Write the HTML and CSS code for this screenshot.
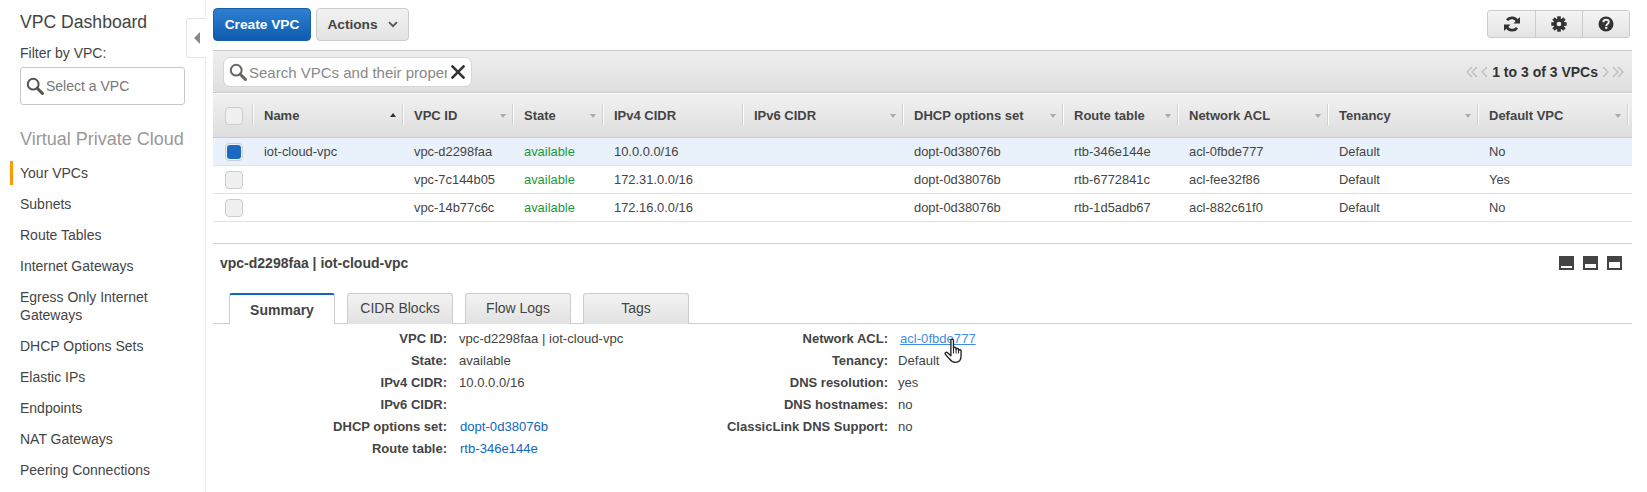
FILE: index.html
```html
<!DOCTYPE html>
<html lang="en">
<head>
<meta charset="utf-8">
<title>VPC Dashboard</title>
<link rel="stylesheet" href="styles.css">
</head>
<body>
<div class="app">
  <nav class="sidebar">
    <h1 class="dash-title">VPC Dashboard</h1>
    <div class="filter-label">Filter by VPC:</div>
    <div class="filter-box">
      <svg class="filter-icon" viewBox="0 0 18 18" width="18" height="18"><circle cx="7.2" cy="7.2" r="5.4" fill="none" stroke="#555" stroke-width="2"/><path d="M11.2 11.2L16.4 16.4" stroke="#555" stroke-width="3" stroke-linecap="round"/></svg>
      <span>Select a VPC</span>
    </div>
    <div class="nav-heading">Virtual Private Cloud</div>
    <ul class="nav-list">
      <li class="nav-item active">Your VPCs</li>
      <li class="nav-item">Subnets</li>
      <li class="nav-item">Route Tables</li>
      <li class="nav-item">Internet Gateways</li>
      <li class="nav-item">Egress Only Internet Gateways</li>
      <li class="nav-item">DHCP Options Sets</li>
      <li class="nav-item">Elastic IPs</li>
      <li class="nav-item">Endpoints</li>
      <li class="nav-item">NAT Gateways</li>
      <li class="nav-item">Peering Connections</li>
    </ul>
    <div class="collapse-handle"><span class="collapse-arrow"></span></div>
  </nav>

  <main class="main">
    <div class="toolbar">
      <button class="btn btn-primary">Create VPC</button>
      <button class="btn btn-default">Actions
        <svg class="caret" viewBox="0 0 10 7" width="10" height="7"><path d="M1 1.2L5 5.2L9 1.2" fill="none" stroke="#555" stroke-width="1.8"/></svg>
      </button>
      <div class="tool-group">
        <div class="tool-btn">
          <svg viewBox="0 0 16 16" width="16" height="16"><path d="M13.6 6.4A6 6 0 0 0 3 4.2M2.4 9.6A6 6 0 0 0 13 11.8" fill="none" stroke="#333" stroke-width="2.8"/><path d="M16 1V7.6H9.4ZM0 15V8.4H6.6Z" fill="#333"/></svg>
        </div>
        <div class="tool-btn">
          <svg viewBox="0 0 16 16" width="16" height="16"><g fill="#333"><circle cx="8" cy="8" r="5.6"/><rect x="6.200" y="0.300" width="3.600" height="15.400"/><rect x="6.200" y="0.300" width="3.600" height="15.400" transform="rotate(45 8 8)"/><rect x="6.200" y="0.300" width="3.600" height="15.400" transform="rotate(90 8 8)"/><rect x="6.200" y="0.300" width="3.600" height="15.400" transform="rotate(135 8 8)"/></g><circle cx="8" cy="8" r="2.300" fill="#eee"/></svg>
        </div>
        <div class="tool-btn">
          <svg viewBox="0 0 16 16" width="16" height="16"><circle cx="8" cy="8" r="7.500" fill="#333"/><path d="M5.300 6.200C5.400 4.600 6.500 3.800 8 3.800c1.600 0 2.800.9 2.800 2.300 0 2-2.500 2-2.500 3.800" fill="none" stroke="#eee" stroke-width="1.900"/><rect x="7.200" y="10.800" width="2.100" height="2.100" fill="#eee"/></svg>
        </div>
      </div>
    </div>

    <div class="search-bar">
      <div class="search-field">
        <svg class="search-icon" viewBox="0 0 18 18" width="18" height="18"><circle cx="7.200" cy="7.200" r="5.400" fill="none" stroke="#666" stroke-width="2"/><path d="M11.200 11.200L16.400 16.400" stroke="#666" stroke-width="3" stroke-linecap="round"/></svg>
        <span class="search-text">Search VPCs and their properties</span>
        <svg class="clear-icon" viewBox="0 0 14 14" width="14" height="14"><path d="M.6 .6L13.400 13.400M13.400 .6L.6 13.400" stroke="#333" stroke-width="2.600"/></svg>
      </div>
      <div class="pager">
        <svg viewBox="0 0 22 12" width="22" height="12"><path d="M6 1L1 6L6 11M11 1L6 6L11 11M21 1L16 6L21 11" fill="none" stroke="#bbb" stroke-width="1.200"/></svg>
        <span class="pager-text">1 to 3 of 3 VPCs</span>
        <svg viewBox="0 0 22 12" width="22" height="12"><path d="M1 1L6 6L1 11M11 1L16 6L11 11M16 1L21 6L16 11" fill="none" stroke="#bbb" stroke-width="1.200"/></svg>
      </div>
    </div>

    <div class="grid-row grid-head">
      <div class="head-cell head-check"><span class="check"></span></div>
      <div class="head-cell">Name<span class="sort sort-up"></span></div>
      <div class="head-cell">VPC ID<span class="sort"></span></div>
      <div class="head-cell">State<span class="sort"></span></div>
      <div class="head-cell">IPv4 CIDR</div>
      <div class="head-cell">IPv6 CIDR<span class="sort"></span></div>
      <div class="head-cell">DHCP options set<span class="sort"></span></div>
      <div class="head-cell">Route table<span class="sort"></span></div>
      <div class="head-cell">Network ACL<span class="sort"></span></div>
      <div class="head-cell">Tenancy<span class="sort"></span></div>
      <div class="head-cell">Default VPC<span class="sort"></span></div>
    </div>
    <div class="grid-row body-row selected">
      <div class="cell cell-check"><span class="check checked"></span></div>
      <div class="cell">iot-cloud-vpc</div><div class="cell">vpc-d2298faa</div><div class="cell ok">available</div><div class="cell">10.0.0.0/16</div><div class="cell"></div><div class="cell">dopt-0d38076b</div><div class="cell">rtb-346e144e</div><div class="cell">acl-0fbde777</div><div class="cell">Default</div><div class="cell">No</div>
    </div>
    <div class="grid-row body-row">
      <div class="cell cell-check"><span class="check"></span></div>
      <div class="cell"></div><div class="cell">vpc-7c144b05</div><div class="cell ok">available</div><div class="cell">172.31.0.0/16</div><div class="cell"></div><div class="cell">dopt-0d38076b</div><div class="cell">rtb-6772841c</div><div class="cell">acl-fee32f86</div><div class="cell">Default</div><div class="cell">Yes</div>
    </div>
    <div class="grid-row body-row">
      <div class="cell cell-check"><span class="check"></span></div>
      <div class="cell"></div><div class="cell">vpc-14b77c6c</div><div class="cell ok">available</div><div class="cell">172.16.0.0/16</div><div class="cell"></div><div class="cell">dopt-0d38076b</div><div class="cell">rtb-1d5adb67</div><div class="cell">acl-882c61f0</div><div class="cell">Default</div><div class="cell">No</div>
    </div>

    <section class="detail">
      <div class="detail-head">
        <h2 class="detail-title">vpc-d2298faa | iot-cloud-vpc</h2>
        <div class="pane-icons">
          <span class="pane-icon pane-s"></span>
          <span class="pane-icon pane-m"></span>
          <span class="pane-icon pane-l"></span>
        </div>
      </div>
      <div class="tabs">
        <div class="tab tab-active">Summary</div>
        <div class="tab">CIDR Blocks</div>
        <div class="tab">Flow Logs</div>
        <div class="tab">Tags</div>
      </div>
      <div class="kv-wrap">
        <dl class="kv kv-left">
          <dt>VPC ID:</dt><dd>vpc-d2298faa | iot-cloud-vpc</dd>
          <dt>State:</dt><dd>available</dd>
          <dt>IPv4 CIDR:</dt><dd>10.0.0.0/16</dd>
          <dt>IPv6 CIDR:</dt><dd></dd>
          <dt>DHCP options set:</dt><dd><a class="link">dopt-0d38076b</a></dd>
          <dt>Route table:</dt><dd><a class="link">rtb-346e144e</a></dd>
        </dl>
        <dl class="kv kv-right">
          <dt>Network ACL:</dt><dd><a class="link link-hover">acl-0fbde777<svg class="hand" viewBox="0 0 19 25" width="20" height="26"><path d="M6.500 2.300c0-1.600 2.500-1.600 2.500 0V10c.3-1.500 2.400-1.400 2.500.1V11c.3-1.300 2.300-1.200 2.400.2v.8c.4-1.100 2.300-1 2.400.4v5c0 3.500-1.700 6-5.300 6-3 0-4.400-1-5.600-3L1.200 15.700c-.9-1.500 1-2.800 2.200-1.600l3.100 2.900Z" fill="#fff" stroke="#222" stroke-width="1.300" stroke-linejoin="round"/><path d="M9 10v5M11.500 11v4M13.900 12v3" stroke="#222" stroke-width="1"/></svg></a></dd>
          <dt>Tenancy:</dt><dd>Default</dd>
          <dt>DNS resolution:</dt><dd>yes</dd>
          <dt>DNS hostnames:</dt><dd>no</dd>
          <dt>ClassicLink DNS Support:</dt><dd>no</dd>
        </dl>
      </div>
    </section>
  </main>
</div>
</body>
</html>
```
FILE: styles.css
```css
* { box-sizing: border-box; }
html, body { margin: 0; padding: 0; height: 100%; overflow: hidden; background: #fff; }
body { font-family: "Liberation Sans", Arial, sans-serif; font-size: 13px; color: #444; }
.app { display: flex; height: 492px; }

.sidebar { position: relative; width: 206px; flex: none; border-right: 1px solid #eaeded; padding: 12px 0 0 20px; }
.dash-title { margin: 0; font-size: 17.6px; font-weight: 400; line-height: 20px; color: #444; }
.filter-label { margin-top: 12px; font-size: 14px; line-height: 18px; color: #444; }
.filter-box { display: flex; align-items: center; gap: 2px; width: 165px; height: 38px; margin-top: 5px; padding-left: 5px; border: 1px solid #c6c6c6; border-radius: 3px; font-size: 14px; color: #777; }
.nav-heading { margin-top: 24px; font-size: 18px; line-height: 20px; color: #999; white-space: nowrap; }
.nav-list { list-style: none; margin: 15px 0 0; padding: 0; }
.nav-item { position: relative; width: 170px; margin-bottom: 13px; font-size: 14px; line-height: 18px; color: #444; }
.nav-item.active::before { content: ""; position: absolute; left: -10px; top: -3px; width: 3px; height: 24px; background: #f90; }
.collapse-handle { position: absolute; left: 186px; top: 18px; width: 20px; height: 40px; display: flex; align-items: center; justify-content: center; background: #fff; border: 1px solid #e4e4e4; border-right: 0; border-radius: 4px 0 0 4px; }
.collapse-arrow { width: 0; height: 0; border-style: solid; border-width: 6px 6px 6px 0; border-color: transparent #888 transparent transparent; }

.main { flex: none; width: 1419px; margin-left: 7px; }

.toolbar { display: flex; align-items: flex-start; height: 50px; padding-top: 8px; }
.btn { display: flex; align-items: center; justify-content: center; height: 33px; border-radius: 4px; font-family: inherit; font-size: 13.700px; font-weight: 700; padding: 0; }
.btn-primary { width: 98px; color: #fff; background: linear-gradient(#2e7fd3, #0f5cb0); border: 1px solid #1a5ea5; }
.btn-default { width: 93px; margin-left: 5px; gap: 10px; color: #444; background: linear-gradient(#f2f2f2, #e3e3e3); border: 1px solid #ccc; }
.tool-group { display: flex; margin-left: auto; margin-right: 2px; margin-top: 2px; height: 28px; border: 1px solid #ccc; border-radius: 3px; background: linear-gradient(#f4f4f4, #e4e4e4); }
.tool-btn { width: 47px; display: flex; align-items: center; justify-content: center; }
.tool-btn + .tool-btn { border-left: 1px solid #ccc; }

.search-bar { display: flex; align-items: center; justify-content: space-between; height: 43px; padding: 1px 8px 0 10px; border-top: 1px solid #ccc; border-bottom: 1px solid #ccc; background: linear-gradient(#eee, #dfdfdf); }
.search-field { display: flex; align-items: center; width: 249px; height: 30px; padding-left: 5px; background: #fff; border: 1px solid #d5d5d5; border-radius: 7px; }
.search-icon { flex: none; }
.search-text { flex: none; width: 198px; margin-left: 2px; overflow: hidden; white-space: nowrap; font-size: 15px; color: #888; }
.clear-icon { flex: none; margin-left: 4px; }
.pager { display: flex; align-items: center; gap: 4px; }
.pager-text { font-size: 14px; font-weight: 700; color: #333; }

.grid-row { display: grid; grid-template-columns: 40px 150px 110px 90px 140px 160px 160px 115px 150px 150px 150px; width: 1419px; }
.grid-head { height: 44px; margin-top: 1px; border-bottom: 1px solid #ccc; background: linear-gradient(#f1f1f1, #dedede); }
.head-cell { position: relative; display: flex; align-items: center; padding-left: 11px; font-size: 13px; font-weight: 700; color: #444; }
.head-cell::after { content: ""; position: absolute; right: -1px; top: 10px; width: 1px; height: 21px; background: #fdfdfd; box-shadow: -1px 0 0 #d0d0d0; }
.head-check { padding-left: 12px; }
.sort { position: absolute; right: 7px; top: 20px; width: 0; height: 0; border-style: solid; border-width: 4px 3.500px 0; border-color: #aaa transparent transparent; }
.sort-up { border-width: 0 3.500px 4px; border-color: transparent transparent #333; top: 19px; }

.check { position: relative; display: block; width: 18px; height: 18px; border: 1px solid #ccc; border-radius: 4px; background: #f0f0f0; }
.check.checked::after { content: ""; position: absolute; inset: 1px; border-radius: 3px; background: #1a6ac4; }

.body-row { height: 28px; border-bottom: 1px solid #e2e2e2; }
.body-row.selected { background: #e9f1fb; }
.cell { display: flex; align-items: center; padding-left: 11px; font-size: 12.900px; color: #444; }
.cell-check { padding-left: 12px; }
.ok { color: #1a9a3c; }

.detail { margin-top: 21px; border-top: 1px solid #ccc; }
.detail-head { display: flex; align-items: center; justify-content: space-between; height: 38px; padding: 0 10px 0 7px; }
.detail-title { margin: 0; font-size: 14px; font-weight: 700; color: #444; }
.pane-icons { display: flex; gap: 9px; }
.pane-icon { position: relative; display: block; width: 15px; height: 14px; background: #444; }
.pane-icon::after { content: ""; position: absolute; left: 2px; right: 2px; bottom: 2px; background: #fff; }
.pane-s::after { height: 2px; }
.pane-m::after { height: 4px; }
.pane-l::after { height: 6px; }

.tabs { display: flex; gap: 12px; height: 31px; margin-top: 11px; padding-left: 16px; border-bottom: 1px solid #ccc; }
.tab { width: 106px; height: 31px; display: flex; align-items: center; justify-content: center; padding-bottom: 2px; border: 1px solid #ccc; border-bottom: 0; border-radius: 3px 3px 0 0; background: linear-gradient(#f2f2f2, #e2e2e2); font-size: 14px; color: #444; }
.tab-active { background: #fff; font-weight: 700; border-top: 2px solid #1166bb; height: 31px; padding-bottom: 0; }

.kv-wrap { display: flex; padding-top: 3px; }
.kv { display: grid; grid-template-columns: 234px auto; grid-auto-rows: 22px; width: 441px; margin: 0; font-size: 13px; align-items: center; }
.kv-left { column-gap: 12px; }
.kv-right { column-gap: 10px; }
.kv dt { font-weight: 700; text-align: right; color: #444; white-space: nowrap; }
.kv dd { margin: 0; font-size: 13.100px; color: #444; white-space: nowrap; }
.link { color: #1166bb; padding-left: 1px; }
.link-hover { position: relative; padding-left: 2px; color: #3f8de8; text-decoration: underline; }
.hand { position: absolute; left: 46px; top: 7px; }
```
